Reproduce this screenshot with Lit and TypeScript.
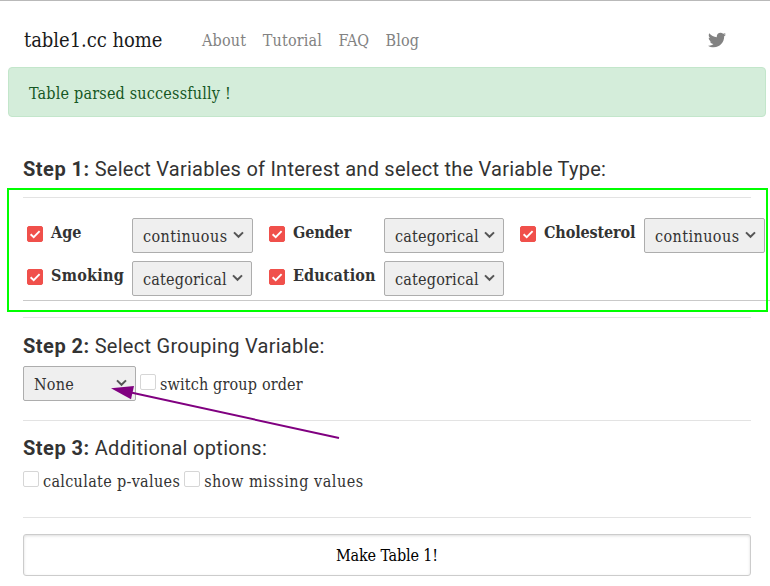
import { LitElement, html, css, svg } from "lit";
import { customElement, property } from "lit/decorators.js";
import { classMap } from "lit/directives/class-map.js";

const tracked = (text: string, spacing = 0) =>
  html`<span style="letter-spacing:${spacing}px">${text}</span>`;

@customElement("check-box")
class CheckBox extends LitElement {
  @property({ type: Boolean }) checked = false;

  static styles = css`
    :host { display: block; flex: none; width: 16px; height: 16px; }
    .box {
      box-sizing: border-box; width: 16px; height: 16px;
      border: 1px solid #d6d6d6; border-radius: 2px; background: #fff;
    }
    .box.on { border-color: #f0504b; background: #f0504b; }
    svg { display: block; width: 14px; height: 14px; }
  `;

  render() {
    return html`<div class=${classMap({ box: true, on: this.checked })}>
      ${this.checked
        ? html`<svg viewBox="0 0 14 14"><path d="M2.6 7.2L5.7 10.1L11.6 4.2" fill="none" stroke="#fff" stroke-width="1.9"/></svg>`
        : ""}
    </div>`;
  }
}

@customElement("select-box")
class SelectBox extends LitElement {
  @property() value = "";
  @property({ type: Number }) spacing = 0;

  static styles = css`
    :host { display: block; flex: none; height: 35px; color: #333; }
    .select {
      box-sizing: border-box; height: 35px; display: flex; align-items: center;
      justify-content: space-between; padding: 2px 8px 0 10px;
      border: 1px solid #adadad; border-radius: 2px; background: #efefef;
      white-space: nowrap;
    }
    svg { display: block; flex: none; width: 11px; height: 8px; margin-bottom: 4px; }
  `;

  render() {
    return html`<div class="select">
      ${tracked(this.value, this.spacing)}
      <svg viewBox="0 0 11 8"><path d="M1 1.4L5.5 5.8L10 1.4" fill="none" stroke="#555" stroke-width="2"/></svg>
    </div>`;
  }
}

interface Variable {
  name: string;
  nameSpacing: number;
  kind: "continuous" | "categorical";
}

const variables: Variable[] = [
  { name: "Age", nameSpacing: 0, kind: "continuous" },
  { name: "Gender", nameSpacing: -0.1, kind: "categorical" },
  { name: "Cholesterol", nameSpacing: -0.13, kind: "continuous" },
  { name: "Smoking", nameSpacing: 0.26, kind: "categorical" },
  { name: "Education", nameSpacing: 0.08, kind: "categorical" },
];

const kindSpacing = { continuous: 0.42, categorical: 0.2 };

const links: [string, number][] = [
  ["About", 0.2],
  ["Tutorial", 0.15],
  ["FAQ", -0.1],
  ["Blog", 0.1],
];

const bird = svg`<path d="M459.37 151.716c.325 4.548.325 9.097.325 13.645 0 138.72-105.583 298.558-298.558 298.558-59.452 0-114.68-17.219-161.137-47.106 8.447.974 16.568 1.299 25.34 1.299 49.055 0 94.213-16.568 130.274-44.832-46.132-.975-84.792-31.188-98.112-72.772 6.498.974 12.995 1.624 19.818 1.624 9.421 0 18.843-1.3 27.614-3.573-48.081-9.747-84.143-51.98-84.143-102.985v-1.299c13.969 7.797 30.214 12.67 47.431 13.319-28.264-18.843-46.781-51.005-46.781-87.391 0-19.492 5.197-37.36 14.294-52.954 51.655 63.675 129.3 105.258 216.365 109.807-1.624-7.797-2.599-15.918-2.599-24.04 0-57.828 46.782-104.934 104.934-104.934 30.213 0 57.502 12.67 76.67 33.137 23.715-4.548 46.456-13.32 66.599-25.34-7.798 24.366-24.366 44.833-46.132 57.827 21.117-2.273 41.584-8.122 60.426-16.243-14.292 20.791-32.161 39.308-52.628 54.253z" fill="#828282"/>`;

@customElement("app-root")
class AppRoot extends LitElement {
  static styles = css`
    :host {
      display: block; position: relative; box-sizing: border-box;
      width: 770px; height: 586px; overflow: hidden;
      background: #fff; color: #333; border-top: 1px solid #b9b9b9;
      font: 16px/24px "DejaVu Serif Condensed", "DejaVu Serif", serif;
      font-stretch: condensed;
      white-space: nowrap;
    }
    nav { display: flex; align-items: center; height: 66px; padding: 12px 44px 0 24px; box-sizing: border-box; }
    .brand { width: 178px; font-size: 20px; line-height: 30px; color: #1a1a1a; }
    .links { display: flex; gap: 16.5px; flex: 1; padding-top: 2px; color: #828282; }
    .bird { width: 18px; height: 18px; display: block; }
    .alert {
      box-sizing: border-box; height: 50px; margin: 0 4px 0 8px; padding: 14px 20px 10px;
      border: 1px solid #c3e6cb; border-radius: 4px; background: #d4edda; color: #155724;
    }
    main { padding: 36px 19px 0 23px; }
    h2 { margin: 0; font: 400 20px/32px Roboto, sans-serif; color: #333; }
    h2 b { font-weight: 700; margin-right: 5px; }
    .rule { height: 1px; background: #e3e3e3; }
    .first { margin-top: 12px; }
    .variables {
      display: grid; grid-template-columns: 246px 251px 251px; grid-auto-rows: 43px;
      width: 748px; margin-top: 16px; border-bottom: 1px solid #c9c9c9;
    }
    .variable { display: flex; align-items: center; }
    .variable:nth-child(3n + 1) { padding-left: 4px; }
    .variable check-box { margin-bottom: 4px; }
    .name { width: 89px; padding: 0 0 5px 8px; box-sizing: border-box; font-weight: 700; }
    .middle { width: 99px; }
    .last { width: 108px; }
    .continuous { width: 121px; }
    .categorical { width: 120px; }
    .second { margin-top: 16px; }
    .title-group { margin-top: 12px; }
    .group { display: flex; margin-top: 4px; height: 35px; }
    .group select-box { width: 113px; }
    .group check-box { margin: 8px 4px 0 4px; }
    .group .text { margin-top: 7px; }
    .third { margin-top: 19px; }
    .title-options { margin-top: 11px; }
    .options { display: flex; margin-top: 5px; height: 24px; }
    .options check-box { margin: 2px 4px 0 0; }
    .options .text { margin: 1px 4px 0 0; }
    .fourth { margin-top: 24px; }
    .make {
      box-sizing: border-box; display: block; width: 728px; height: 42px; margin-top: 16px; padding: 2px 0 0;
      border: 1px solid #ccc; border-radius: 3px; background: #fff; color: #000;
      box-shadow: inset 0 1px 3px #ddd; font: inherit;
    }
    .highlight {
      position: absolute; left: 7px; top: 187px; width: 761px; height: 124px;
      box-sizing: border-box; border: 2px solid #0f0;
    }
    .arrow { position: absolute; left: 105px; top: 379px; width: 240px; height: 65px; }
  `;

  private variable(v: Variable, index: number) {
    const column = index % 3;
    return html`<div class="variable">
      <check-box checked></check-box>
      <span class=${classMap({ name: true, middle: column === 1, last: column === 2 })}>${tracked(v.name, v.nameSpacing)}</span>
      <select-box class=${v.kind} .value=${v.kind} .spacing=${kindSpacing[v.kind]}></select-box>
    </div>`;
  }

  private heading(step: string, text: string, spacing: number) {
    return html`<b>${tracked(step, 0.5)}</b>${tracked(text, spacing)}`;
  }

  render() {
    return html`
      <nav>
        <span class="brand">${tracked("table1.cc home", -0.04)}</span>
        <div class="links">${links.map(([t, s]) => html`<span>${tracked(t, s)}</span>`)}</div>
        <svg class="bird" viewBox="0 0 512 512">${bird}</svg>
      </nav>
      <div class="alert">${tracked("Table parsed successfully !", 0.2)}</div>
      <main>
        <h2>${this.heading("Step 1:", "Select Variables of Interest and select the Variable Type:", 0.24)}</h2>
        <div class="rule first"></div>
        <div class="variables">${variables.map((v, i) => this.variable(v, i))}</div>
        <div class="rule second"></div>
        <h2 class="title-group">${this.heading("Step 2:", "Select Grouping Variable:", 0.27)}</h2>
        <div class="group">
          <select-box .value=${"None"} .spacing=${0.2}></select-box>
          <check-box></check-box>
          <span class="text">${tracked("switch group order", 0.16)}</span>
        </div>
        <div class="rule third"></div>
        <h2 class="title-options">${this.heading("Step 3:", "Additional options:", 0.3)}</h2>
        <div class="options">
          <check-box></check-box>
          <span class="text">${tracked("calculate p-values", 0.33)}</span>
          <check-box></check-box>
          <span class="text">${tracked("show missing values", 0.54)}</span>
        </div>
        <div class="rule fourth"></div>
        <button class="make">${tracked("Make Table 1!", -0.15)}</button>
      </main>
      <div class="highlight"></div>
      <svg class="arrow" viewBox="105 380 240 65">
        <path d="M131 392.5L339 438" stroke="#800080" stroke-width="1.9" fill="none"/>
        <path d="M111 388.2L134 386L131 399.3Z" fill="#800080"/>
      </svg>
    `;
  }
}
